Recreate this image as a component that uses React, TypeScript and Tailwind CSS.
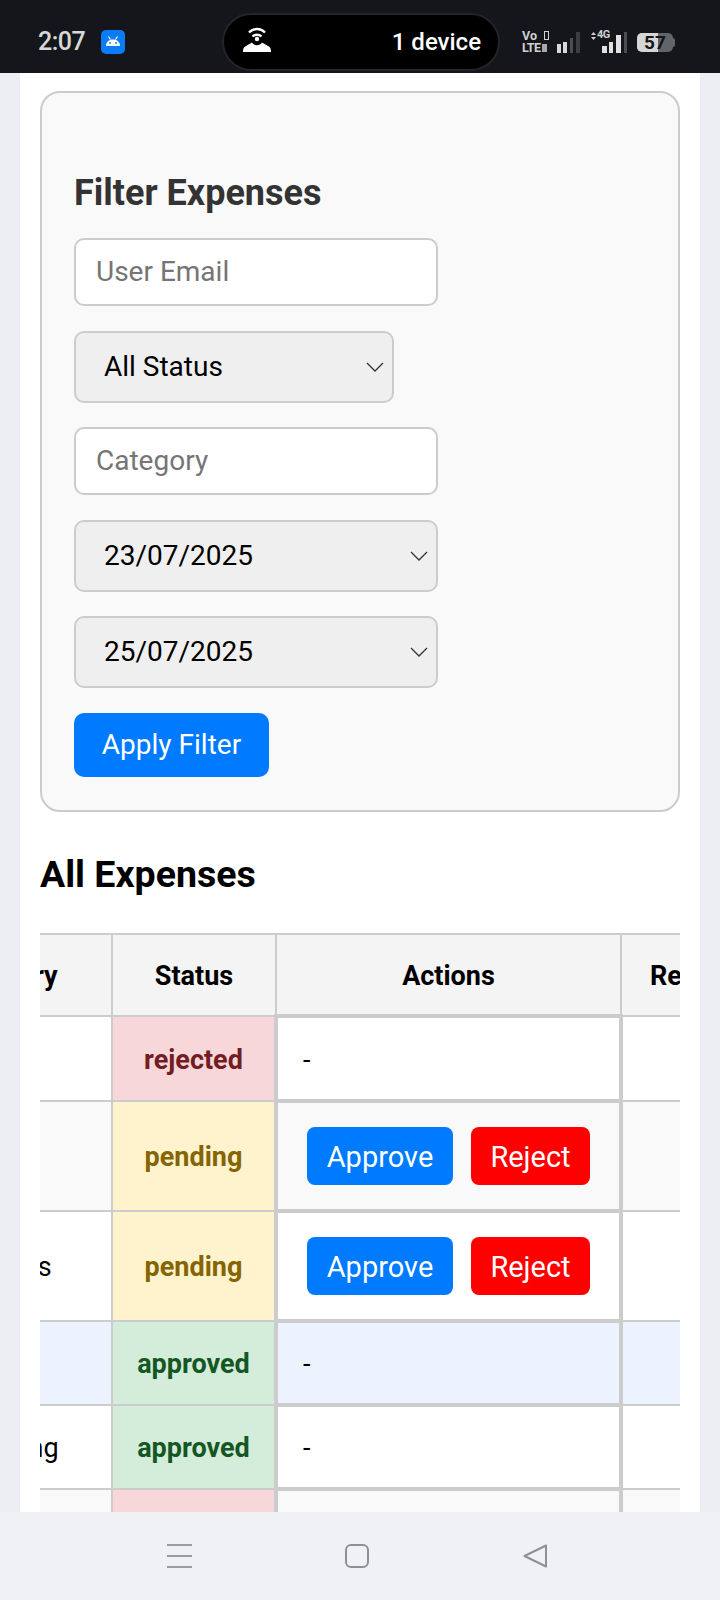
import React from 'react';

type Status = 'rejected' | 'pending' | 'approved';

interface Row {
  category: string;
  status: Status;
  height: string;
  bg: string;
}

const rows: Row[] = [
  { category: 'Food', status: 'rejected', height: 'h-[85px]', bg: 'bg-white' },
  { category: 'Travel', status: 'pending', height: 'h-[110px]', bg: 'bg-[#f9f9f9]' },
  { category: 'Utilities', status: 'pending', height: 'h-[110px]', bg: 'bg-white' },
  { category: 'Food', status: 'approved', height: 'h-[84px]', bg: 'bg-[#ecf3fe]' },
  { category: 'Training', status: 'approved', height: 'h-[84px]', bg: 'bg-white' },
  { category: 'Travel', status: 'rejected', height: 'h-[84px]', bg: 'bg-[#f9f9f9]' },
];

const statusStyles: Record<Status, string> = {
  rejected: 'bg-[#f8d7da] text-[#721c24]',
  pending: 'bg-[#fff3cd] text-[#856404]',
  approved: 'bg-[#d4edda] text-[#155724]',
};

function StatusBar() {
  return (
    <div className="h-[73px] shrink-0 bg-[#14161b] flex items-center">
      <span className="ml-[38px] w-[48px] text-[25px] font-medium text-[#d8d8d8] tracking-[-0.5px] mt-[10px]">2:07</span>
      <svg className="ml-[15px] mt-[10px]" width="24" height="24" viewBox="0 0 24 24">
        <rect width="24" height="24" rx="5" fill="#0a7cf5" />
        <path d="M5 16c0-4 3-6.500 7-6.500s7 2.500 7 6.500z" fill="#fff" />
        <path d="M7.500 6.500l2 3M16.500 6.500l-2 3" stroke="#fff" strokeWidth="1.200" />
        <circle cx="9" cy="13" r="0.900" fill="#0a7cf5" />
        <circle cx="15" cy="13" r="0.900" fill="#0a7cf5" />
      </svg>
      <div className="ml-[97px] mt-[10px] w-[278px] h-[58px] rounded-full bg-black border-2 border-[#22242a] flex items-center justify-between pl-[18px] pr-[17px]">
        <svg width="30" height="26" viewBox="0 0 30 26" className="mt-[-6px]">
          <path d="M7 6.500a11 11 0 0 1 16 0" stroke="#fff" strokeWidth="2.400" fill="none" />
          <path d="M10.500 10.500a6.500 6.500 0 0 1 9 0" stroke="#fff" strokeWidth="2.400" fill="none" />
          <circle cx="15" cy="13" r="2.200" fill="#fff" />
          <path d="M1 26c0-3 .5-5 3-6l6-3.500c2 3.500 8 3.500 10 0l6 3.500c2.500 1 3 3 3 6z" fill="#fff" />
        </svg>
        <span className="text-[24px] font-medium text-white">1 device</span>
      </div>
      <div className="ml-[22px] mt-[10px] w-[28px] flex flex-col text-[12.500px] leading-[12px] font-bold text-[#d0d0d0]">
        <div className="flex items-center justify-between pr-[1px]">
          <span>Vo</span>
          <span className="w-[5px] h-[9px] border-[1.500px] border-[#d0d0d0]" />
        </div>
        <div className="flex items-center gap-[1px] tracking-[-0.5px]">
          <span>LTE</span>
          <span className="w-[5px] h-[8px] bg-[#a8a8a8]" />
        </div>
      </div>
      <svg className="ml-[6px] mt-[10px]" width="26" height="24" viewBox="0 0 26 24">
        <rect x="1" y="14" width="4" height="9" fill="#d8d8d8" />
        <rect x="7" y="12" width="4" height="11" fill="#d8d8d8" />
        <rect x="14" y="8" width="3" height="15" fill="#4b4d50" />
        <rect x="20" y="2" width="4" height="21" fill="#3b3d40" />
      </svg>
      <div className="ml-[8px] mt-[10px] w-[38px] h-[24px] relative">
        <svg className="absolute left-0 top-0" width="38" height="24" viewBox="0 0 38 24">
          <path d="M1 5l2.500-3L6 5zM1 7l2.500 3L6 7z" fill="#d0d0d0" />
          <rect x="12" y="16" width="5" height="7" fill="#e0e0e0" />
          <rect x="19" y="12" width="4" height="11" fill="#e0e0e0" />
          <rect x="26" y="5" width="5" height="18" fill="#e0e0e0" />
          <rect x="34" y="2" width="3" height="21" fill="#4b4d50" />
        </svg>
        <span className="absolute left-[7px] top-[-1px] text-[11px] leading-[12px] font-bold text-[#d0d0d0] tracking-[-0.5px]">4G</span>
      </div>
      <div className="ml-[9px] mt-[12px] flex items-center">
        <div className="w-[36px] h-[19px] rounded-[5px] bg-[#626468] relative">
          <div className="w-[21px] h-full rounded-l-[5px] bg-[#d6d6d6]" />
          <span className="absolute inset-0 text-center text-[19px] leading-[19px] font-bold text-[#14161b]">57</span>
        </div>
        <div className="w-[2px] h-[9px] rounded-r-[2px] bg-[#626468]" />
      </div>
    </div>
  );
}

function NavBar() {
  return (
    <div className="h-[88px] shrink-0 bg-[#f0f1f5] flex items-start pt-[32px] pl-[167px]">
      <svg width="25" height="24" viewBox="0 0 25 24" className="shrink-0">
        <path d="M0 1h25M0 12h25M0 23h25" stroke="#9a9ca3" strokeWidth="2" />
      </svg>
      <svg width="24" height="24" viewBox="0 0 24 24" className="ml-[153px] shrink-0">
        <rect x="1" y="1" width="22" height="22" rx="5" fill="none" stroke="#8e9096" strokeWidth="2" />
      </svg>
      <svg width="24" height="24" viewBox="0 0 24 24" className="ml-[154px] shrink-0">
        <path d="M23 1.500v21L1.500 12z" fill="none" stroke="#8e9096" strokeWidth="2" strokeLinejoin="round" />
      </svg>
    </div>
  );
}

function Chevron() {
  return (
    <svg width="18" height="10" viewBox="0 0 18 10" className="shrink-0">
      <path d="M1 1l8 8 8-8" fill="none" stroke="#333" strokeWidth="1.300" />
    </svg>
  );
}

function FakeSelect({ label, width }: { label: string; width: string }) {
  return (
    <div className={`${width} h-[72px] rounded-[10px] border-2 border-[#cccccc] bg-[#efefef] flex items-center justify-between pl-[28px] pr-[8px] text-[28px] text-black`}>
      <span>{label}</span>
      <Chevron />
    </div>
  );
}

function TextInput({ placeholder }: { placeholder: string }) {
  return (
    <input
      placeholder={placeholder}
      className="w-[364px] h-[68px] rounded-[10px] border-2 border-[#cccccc] bg-white pl-[20px] pb-[2px] text-[28px] placeholder:text-[#757575] outline-none"
    />
  );
}

export default function App() {
  return (
    <div className="w-[720px] h-[1600px] flex flex-col bg-[#eceef3] font-['Roboto',sans-serif] overflow-hidden">
      <StatusBar />
      <div className="flex-1 min-h-0 mx-[20px] bg-white overflow-hidden px-[20px] pt-[18px]">
        <div className="rounded-[20px] border-2 border-[#cccccc] bg-[#f9f9f9] pt-[80px] pb-[33px] px-[32px] flex flex-col">
          <h2 className="text-[36px] leading-[40px] font-bold text-[#333333] mb-[25px]">Filter Expenses</h2>
          <div className="flex flex-col gap-[24.500px] items-start">
            <TextInput placeholder="User Email" />
            <FakeSelect label="All Status" width="w-[320px]" />
            <TextInput placeholder="Category" />
            <FakeSelect label="23/07/2025" width="w-[364px]" />
            <FakeSelect label="25/07/2025" width="w-[364px]" />
            <button className="w-[195px] h-[64px] rounded-[10px] bg-[#007bff] text-white text-[28px]">Apply Filter</button>
          </div>
        </div>

        <h2 className="mt-[40px] mb-[37px] text-[37.500px] leading-[44px] font-bold text-black">All Expenses</h2>

        <div className="overflow-hidden">
          <table className="border-collapse table-fixed w-[760px] ml-[-111px] text-[27px]">
            <colgroup>
              <col className="w-[182px]" />
              <col className="w-[164px]" />
              <col className="w-[345px]" />
              <col className="w-[180px]" />
            </colgroup>
            <thead>
              <tr className="h-[82px] bg-[#f4f4f4]">
                <th className="border-2 border-[#cccccc] font-bold text-center pt-[4px] pr-[37px]">Category</th>
                <th className="border-2 border-[#cccccc] font-bold text-center pt-[4px]">Status</th>
                <th className="border-2 border-[#cccccc] font-bold text-center pt-[4px]">Actions</th>
                <th className="border-2 border-[#cccccc] font-bold text-left pt-[4px] pl-[28px]">Receipt</th>
              </tr>
            </thead>
            <tbody>
              {rows.map((row, i) => (
                <tr key={i} className={`${row.height} ${row.bg}`}>
                  <td className="border-2 border-[#cccccc] pl-[31px] pt-[4px] whitespace-nowrap overflow-hidden">{row.category}</td>
                  <td className={`border-2 border-[#cccccc] text-center font-bold pt-[4px] ${statusStyles[row.status]}`}>{row.status}</td>
                  {row.status === 'pending' ? (
                    <td className="border-[4px] border-[#cccccc] pl-[29px]">
                      <div className="flex gap-[18px]">
                        <button className="w-[146px] h-[58px] rounded-[8px] bg-[#007bff] text-white text-[29px] pt-[4px]">Approve</button>
                        <button className="w-[119px] h-[58px] rounded-[8px] bg-[#ff0000] text-white text-[29px] pt-[4px]">Reject</button>
                      </div>
                    </td>
                  ) : (
                    <td className="border-[4px] border-[#cccccc] pl-[25px] pt-[4px]">-</td>
                  )}
                  <td className="border-2 border-[#cccccc]" />
                </tr>
              ))}
            </tbody>
          </table>
        </div>
      </div>
      <NavBar />
    </div>
  );
}
